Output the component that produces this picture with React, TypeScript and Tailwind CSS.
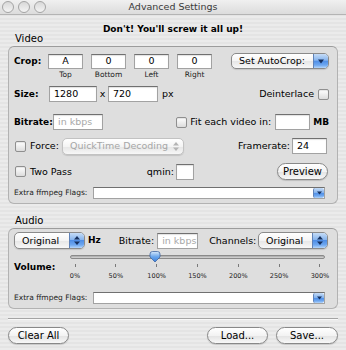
import React from "react";

function Check() {
  return (
    <div className="w-[11px] h-[11px] shrink-0 rounded-[2px] border border-[#8f8f8f] bg-[linear-gradient(#ffffff,#ececec_55%,#dcdcdc)] shadow-[inset_0_1px_1px_rgba(0,0,0,0.1)]" />
  );
}

function Field({ className, children, dim, center }: { className: string; children?: React.ReactNode; dim?: boolean; center?: boolean }) {
  return (
    <div
      className={`shrink-0 flex items-center overflow-hidden whitespace-nowrap bg-white border border-[#a2a2a2] border-t-[#707070] shadow-[inset_0_1px_1px_rgba(0,0,0,0.12)] px-[4px] text-[9.5px] leading-none ${
        center ? "justify-center" : ""
      } ${dim ? "text-[#a8a8a8]" : "text-black"} ${className}`}
    >
      {children}
    </div>
  );
}

function UpDown({ color }: { color: string }) {
  return (
    <svg width="6" height="9" viewBox="0 0 6 9">
      <path d="M3 0 L6 3.4 H0 Z" fill={color} />
      <path d="M3 9 L6 5.6 H0 Z" fill={color} />
    </svg>
  );
}

function Down() {
  return (
    <svg width="6" height="5" viewBox="0 0 6 5">
      <path d="M0 0.5 H6 L3 4.5 Z" fill="#16305e" />
    </svg>
  );
}

const BLUE =
  "bg-[linear-gradient(#c6dcf6,#86b4ee_45%,#4f8ee6_50%,#6fa8f0_80%,#b6d6fa)] border-l border-[#5f82b8]";

function Popup({ className, label, pulldown, disabled }: { className: string; label: string; pulldown?: boolean; disabled?: boolean }) {
  return (
    <div
      className={`shrink-0 flex overflow-hidden rounded-[5px] border ${
        disabled ? "border-[#c2c2c2] text-[#a6a6a6]" : "border-[#8a8a8a] text-black"
      } bg-[linear-gradient(#ffffff,#f4f4f4_50%,#e6e6e6_52%,#f7f7f7)] shadow-[0_1px_1px_rgba(0,0,0,0.12)] text-[9.5px] leading-none ${className}`}
    >
      <div className="flex-1 flex items-center pl-[7px] whitespace-nowrap">{label}</div>
      {disabled ? (
        <div className="w-[15px] flex items-center justify-center">
          <UpDown color="#b4b4b4" />
        </div>
      ) : (
        <div className={`w-[15px] flex items-center justify-center ${BLUE}`}>
          {pulldown ? <Down /> : <UpDown color="#16305e" />}
        </div>
      )}
    </div>
  );
}

function Combo() {
  return (
    <div className="w-[232px] h-[12px] flex bg-white border border-[#a2a2a2] border-t-[#707070]">
      <div className="flex-1" />
      <div className={`w-[11px] h-[10px] rounded-[2px] flex items-center justify-center ${BLUE}`}>
        <svg width="5" height="4" viewBox="0 0 5 4">
          <path d="M0 0.5 H5 L2.5 3.5 Z" fill="#16305e" />
        </svg>
      </div>
    </div>
  );
}

function AquaButton({ className, label }: { className: string; label: string }) {
  return (
    <div
      className={`shrink-0 h-[17px] flex items-center justify-center rounded-full border border-[#888888] bg-[linear-gradient(#ffffff,#f3f3f3_50%,#e3e3e3_52%,#f8f8f8)] shadow-[0_1px_1px_rgba(0,0,0,0.15)] text-[10px] leading-none text-black ${className}`}
    >
      {label}
    </div>
  );
}

function ExtraFlags() {
  return (
    <div className="flex items-center h-[12px]">
      <span className="w-[79px] text-[7.5px] leading-none text-[#222]">Extra ffmpeg Flags:</span>
      <Combo />
    </div>
  );
}

const TICKS = ["0%", "50%", "100%", "150%", "200%", "250%", "300%"];

export default function App() {
  return (
    <div className="w-[346px] h-[350px] overflow-hidden font-['DejaVu_Sans',sans-serif] text-[9.5px] leading-none text-black bg-[repeating-linear-gradient(0deg,#ebebeb_0px,#ebebeb_2px,#e4e4e4_2px,#e4e4e4_4px)]">
      {/* title bar */}
      <div className="h-[15px] flex items-center border-b border-[#b4b4b4] bg-[linear-gradient(#f0f0f0,#dcdcdc)]">
        <div className="w-[48px] flex gap-[4px] pl-[2px]">
          {[0, 1, 2].map((i) => (
            <div key={i} className="w-[12px] h-[12px] rounded-full border border-[#a4a4a4] bg-[linear-gradient(#d8d8d8,#f4f4f4)]" />
          ))}
        </div>
        <div className="flex-1 text-center text-[9.5px] text-[#3a3a3a]">Advanced Settings</div>
        <div className="w-[48px]" />
      </div>

      <div className="mt-[7px] h-[14px] flex items-center justify-center font-bold text-[9px]">
        Don't! You'll screw it all up!
      </div>

      <div className="px-[8px]">
        <div className="mt-[-3px] h-[12px] flex items-center pl-[7px] text-[10px]">Video</div>

        {/* Video box */}
        <div className="mt-[1px] rounded-[6px] border border-[#b2b2b2] border-t-[#9c9c9c] bg-[#dedede] pl-[5px] pr-[8px] pt-[6px] pb-[4px]">
          <div className="flex items-center h-[16px]">
            <span className="w-[34px] font-bold text-[9px]">Crop:</span>
            <div className="flex gap-[8px]">
              {["A", "0", "0", "0"].map((v, i) => (
                <Field key={i} className="w-[35px] h-[15px]" center>
                  {v}
                </Field>
              ))}
            </div>
            <Popup className="ml-auto w-[98px] h-[16px]" label="Set AutoCrop:" pulldown />
          </div>
          <div className="flex mt-[1px] h-[10px] items-center">
            <span className="w-[34px]" />
            <div className="flex gap-[8px]">
              {["Top", "Bottom", "Left", "Right"].map((v) => (
                <span key={v} className="w-[35px] text-center text-[7.5px] text-[#222]">
                  {v}
                </span>
              ))}
            </div>
          </div>

          <div className="flex items-center h-[16px] mt-[6px]">
            <span className="w-[35px] font-bold text-[9px]">Size:</span>
            <Field className="w-[48px] h-[16px]">1280</Field>
            <span className="w-[11px] text-center">x</span>
            <Field className="w-[50px] h-[16px]">720</Field>
            <span className="ml-[4px]">px</span>
            <span className="ml-auto mr-[4px]">Deinterlace</span>
            <Check />
          </div>

          <div className="flex items-center h-[16px] mt-[12px]">
            <span className="w-[39px] font-bold text-[9px]">Bitrate:</span>
            <Field className="w-[50px] h-[16px]" dim>
              in kbps
            </Field>
            <div className="ml-auto flex items-center">
              <Check />
              <span className="ml-[3px]">Fit each video in:</span>
              <Field className="ml-[4px] w-[35px] h-[16px]" />
              <span className="ml-[3px] font-bold text-[9px]">MB</span>
            </div>
          </div>

          <div className="flex items-center h-[18px] mt-[7px]">
            <div className="ml-[1px]">
              <Check />
            </div>
            <span className="ml-[4px] w-[28px]">Force:</span>
            <Popup className="ml-[4px] w-[122px] h-[17px]" label="QuickTime Decoding" disabled />
            <span className="ml-auto">Framerate:</span>
            <Field className="ml-[2px] mr-[2px] w-[35px] h-[16px] border-[#7e9ec8] shadow-[0_0_0_2px_#a9c6ec]">24</Field>
          </div>

          <div className="flex items-center h-[17px] mt-[8px]">
            <div className="ml-[1px]">
              <Check />
            </div>
            <span className="ml-[4px] w-[44px]">Two Pass</span>
            <span className="w-[102px] text-right pr-[2px]">qmin:</span>
            <Field className="w-[18px] h-[16px]" />
            <AquaButton className="ml-auto mr-[1px] w-[51px]" label="Preview" />
          </div>

          <div className="mt-[7px]">
            <ExtraFlags />
          </div>
        </div>

        <div className="mt-[11px] h-[12px] flex items-center pl-[7px] text-[10px]">Audio</div>

        {/* Audio box */}
        <div className="mt-[1px] rounded-[6px] border border-[#b2b2b2] border-t-[#9c9c9c] bg-[#dedede] pl-[5px] pr-[8px] pt-[3px] pb-[4px]">
          <div className="flex items-center h-[17px]">
            <Popup className="w-[71px] h-[17px]" label="Original" />
            <span className="ml-[3px] font-bold text-[9px]">Hz</span>
            <span className="ml-[18px]">Bitrate:</span>
            <Field className="ml-[3px] w-[41px] h-[16px] px-[3px]" dim>
              in kbps
            </Field>
            <span className="ml-[11px]">Channels:</span>
            <Popup className="ml-auto mr-[1px] w-[70px] h-[17px]" label="Original" />
          </div>

          <div className="flex mt-[2px]">
            <span className="w-[56px] mt-[11px] h-[10px] flex items-center font-bold text-[9px]">Volume:</span>
            <div className="w-[255px] flex flex-col">
              <div className="relative h-[12px]">
                <div className="mt-[4px] h-[4px] rounded-full border border-[#8a8a8a] bg-[linear-gradient(#a8a8a8,#d8d8d8)]" />
                <svg className="absolute left-[79px] top-0" width="12" height="12" viewBox="0 0 12 12">
                  <defs>
                    <linearGradient id="kn" x1="0" y1="0" x2="0" y2="1">
                      <stop offset="0" stopColor="#d6e8fb" />
                      <stop offset="0.5" stopColor="#6aa6ec" />
                      <stop offset="1" stopColor="#3b7fdc" />
                    </linearGradient>
                  </defs>
                  <path d="M1 3 Q1 0.5 3.5 0.5 H8.5 Q11 0.5 11 3 V6 L6 11 L1 6 Z" fill="url(#kn)" stroke="#3f66a2" strokeWidth="0.8" />
                </svg>
              </div>
              <div className="flex justify-between px-[5px] h-[4px] mt-[1px]">
                {TICKS.map((t) => (
                  <div key={t} className="w-0 flex justify-center">
                    <div className="w-[1px] h-[3px] shrink-0 bg-[#7a7a7a]" />
                  </div>
                ))}
              </div>
              <div className="flex justify-between px-[5px] h-[9px] mt-[5px]">
                {TICKS.map((t) => (
                  <div key={t} className="w-0 flex justify-center">
                    <span className="shrink-0 text-[6.5px] text-[#222] whitespace-nowrap">{t}</span>
                  </div>
                ))}
              </div>
            </div>
          </div>

          <div className="mt-[10px]">
            <ExtraFlags />
          </div>
        </div>

        <div className="mt-[9px] h-[2px] border-t border-[#a4a4a4] border-b border-b-[#f8f8f8]" />

        <div className="mt-[7px] flex">
          <AquaButton className="w-[61px]" label="Clear All" />
          <AquaButton className="ml-auto w-[61px]" label="Load..." />
          <AquaButton className="ml-[8px] w-[62px]" label="Save..." />
        </div>
      </div>
    </div>
  );
}
